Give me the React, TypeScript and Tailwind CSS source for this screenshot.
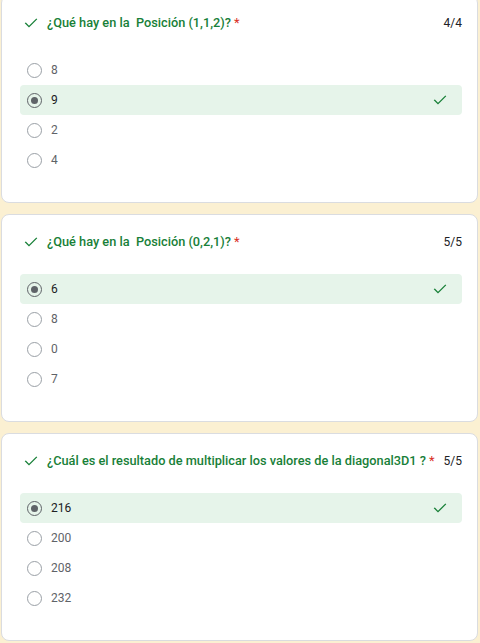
import React from 'react';

type Question = {
  title: string;
  score: string;
  options: string[];
  selected: number;
};

const questions: Question[] = [
  { title: '¿Qué hay en la  Posición (1,1,2)?', score: '4/4', options: ['8', '9', '2', '4'], selected: 1 },
  { title: '¿Qué hay en la  Posición (0,2,1)?', score: '5/5', options: ['6', '8', '0', '7'], selected: 0 },
  {
    title: '¿Cuál es el resultado de multiplicar los valores de la diagonal3D1 ?',
    score: '5/5',
    options: ['216', '200', '208', '232'],
    selected: 0,
  },
];

const Check: React.FC<{ className?: string }> = ({ className }) => (
  <svg viewBox="0 0 24 24" className={className} fill="none" stroke="currentColor" strokeWidth={2} strokeLinecap="square">
    <path d="M4 12.5l5 5L20 6.5" />
  </svg>
);

const Radio: React.FC<{ checked: boolean }> = ({ checked }) => (
  <span
    className={`flex h-[15px] w-[15px] items-center justify-center rounded-full border-[1.5px] ${
      checked ? 'border-[#5f6368]' : 'border-[#9aa0a6]'
    }`}
  >
    {checked && <span className="h-[7px] w-[7px] rounded-full bg-[#5f6368]" />}
  </span>
);

const QuestionCard: React.FC<{ q: Question }> = ({ q }) => (
  <div className="mx-[1px] mr-[2px] h-[208px] rounded-[8px] border border-[#dadce0] bg-white pl-[18px] pr-[15px] pt-[17px]">
    <div className="flex h-[20px] items-center">
      <Check className="ml-[3px] h-[16px] w-[16px] text-[#188038]" />
      <span className="ml-[8px] whitespace-pre text-[12.75px] font-medium text-[#188038]">{q.title}</span>
      <span className="ml-[3px] text-[13px] text-[#d93025]">*</span>
      <span className="ml-auto text-[12px] text-[#202124]">{q.score}</span>
    </div>
    <div className="mt-[22px] flex flex-col">
      {q.options.map((opt, i) => {
        const sel = i === q.selected;
        return (
          <div
            key={opt}
            className={`flex h-[30px] items-center rounded-[4px] pl-[7px] pr-[14px] ${sel ? 'bg-[#e6f4ea]' : ''}`}
          >
            <Radio checked={sel} />
            <span className={`ml-[9px] text-[12px] ${sel ? 'text-[#202124]' : 'text-[#5f6368]'}`}>{opt}</span>
            {sel && <Check className="ml-auto h-[16px] w-[16px] text-[#188038]" />}
          </div>
        );
      })}
    </div>
  </div>
);

export default function App() {
  return (
    <div className="h-[643px] overflow-hidden bg-[#fbf0d2] font-['Roboto',sans-serif]">
      <div className="-mt-[5px] flex flex-col gap-[11px]">
        {questions.map((q) => (
          <QuestionCard key={q.title} q={q} />
        ))}
      </div>
    </div>
  );
}
